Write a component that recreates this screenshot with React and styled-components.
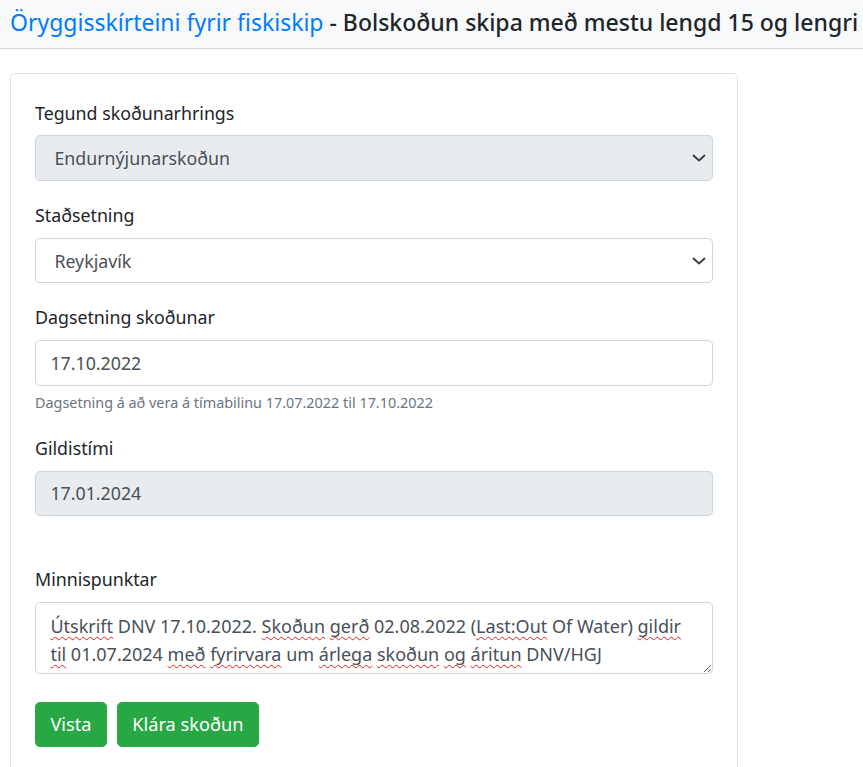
import * as React from "react"
import styled, { createGlobalStyle } from "styled-components"

const GlobalStyle = createGlobalStyle`
  body {
    margin: 0;
    background: #fff;
    color: #212529;
    font-family: "Noto Sans", "Open Sans", sans-serif;
  }
  * { box-sizing: border-box; }
`

const Header = styled.header`
  background: #f8f9fa;
  border-bottom: 1px solid #d3d5d8;
  padding: 8px 10px 11px;
`

const Title = styled.h5`
  margin: 0;
  font-size: 23px;
  line-height: 29px;
  font-weight: 500;
  white-space: nowrap;
  color: #212529;
`

const TitleLink = styled.a`
  color: #007bff;
  font-weight: 400;
  text-decoration: none;
`

const Card = styled.div`
  width: 728px;
  margin: 24px 0 0 10px;
  border: 1px solid #dfe1e4;
  border-radius: 4.8px;
  padding: 23px 24px 40px;
`

const Group = styled.div`
  margin-bottom: ${p => (p.$mb ?? 18.5)}px;
`

const Label = styled.label`
  display: block;
  font-size: 17.8px;
  line-height: 28.8px;
  padding-top: 1.5px;
  margin-bottom: 8.1px;
  color: #212529;
`

const SelectWrap = styled.div`
  position: relative;
`

const Select = styled.select`
  display: block;
  width: 100%;
  height: 45.6px;
  padding: 0 40px 0 18.4px;
  font: inherit;
  font-size: 17.8px;
  color: #495057;
  background: ${p => (p.disabled ? "#e9ecef" : "#fff")};
  border: 1px solid #ced4da;
  border-radius: 4.8px;
  appearance: none;
  opacity: 1;
  outline: none;
`

const Chevron = styled.svg`
  position: absolute;
  right: 7px;
  top: 50%;
  transform: translateY(-50%);
  pointer-events: none;
`

const Input = styled.input`
  display: block;
  width: 100%;
  height: 45.6px;
  padding: 0 14.4px;
  font: inherit;
  font-size: 17.8px;
  color: #495057;
  background: ${p => (p.readOnly ? "#e9ecef" : "#fff")};
  border: 1px solid #ced4da;
  border-radius: 4.8px;
  outline: none;
`

const Help = styled.small`
  display: block;
  margin-top: 4.8px;
  font-size: 14.4px;
  line-height: 23px;
  color: #6c757d;
`

const NoteBox = styled.div`
  height: 72px;
  padding: 9px 14.4px 5px;
  font-size: 18px;
  line-height: 28px;
  color: #495057;
  border: 1px solid #ced4da;
  border-radius: 4.8px;
  overflow: auto;
  resize: vertical;
`

const Misspelled = styled.span`
  text-decoration: underline wavy #e0201c;
  text-decoration-thickness: 1px;
  text-decoration-skip-ink: none;
  text-underline-offset: 3px;
`

const Actions = styled.div`
  display: flex;
  gap: 10px;
  margin-top: 28px;
`

const Button = styled.button`
  height: 44.6px;
  padding: 0 14.4px;
  font: inherit;
  font-size: 18.2px;
  color: #fff;
  background: #28a745;
  border: 1px solid #28a745;
  border-radius: 4.8px;
  cursor: pointer;
`

const ChevronIcon = () => (
  <Chevron width="14" height="8" viewBox="0 0 14 8">
    <path d="M1.5 1.5l5.5 5 5.5-5" fill="none" stroke="#343a40" strokeWidth="1.8" strokeLinecap="round" strokeLinejoin="round" />
  </Chevron>
)

const SelectField = ({ value, disabled }) => (
  <SelectWrap>
    <Select disabled={disabled} defaultValue={value}>
      <option>{value}</option>
    </Select>
    <ChevronIcon />
  </SelectWrap>
)

const w = t => <Misspelled>{t}</Misspelled>

export default function App() {
  return (
    <>
      <GlobalStyle />
      <Header>
        <Title>
          <TitleLink href="#">Öryggisskírteini fyrir fiskiskip</TitleLink> - Bolskoðun skipa með mestu lengd 15 og lengri
        </Title>
      </Header>
      <Card>
        <Group>
          <Label>Tegund skoðunarhrings</Label>
          <SelectField value="Endurnýjunarskoðun" disabled />
        </Group>
        <Group>
          <Label>Staðsetning</Label>
          <SelectField value="Reykjavík" />
        </Group>
        <Group>
          <Label>Dagsetning skoðunar</Label>
          <Input defaultValue="17.10.2022" />
          <Help>Dagsetning á að vera á tímabilinu 17.07.2022 til 17.10.2022</Help>
        </Group>
        <Group $mb={47.5}>
          <Label>Gildistími</Label>
          <Input readOnly defaultValue="17.01.2024" />
        </Group>
        <Group $mb={0}>
          <Label>Minnispunktar</Label>
          <NoteBox>
            {w("Útskrift")} DNV 17.10.2022. {w("Skoðun")} {w("gerð")} 02.08.2022 ({w("Last:Out")} Of Water) {w("gildir")}{" "}
            {w("til")} 01.07.2024 {w("með")} {w("fyrirvara")} um {w("árlega")} {w("skoðun")} {w("og")} {w("áritun")} DNV/HGJ
          </NoteBox>
        </Group>
        <Actions>
          <Button>Vista</Button>
          <Button>Klára skoðun</Button>
        </Actions>
      </Card>
    </>
  )
}
